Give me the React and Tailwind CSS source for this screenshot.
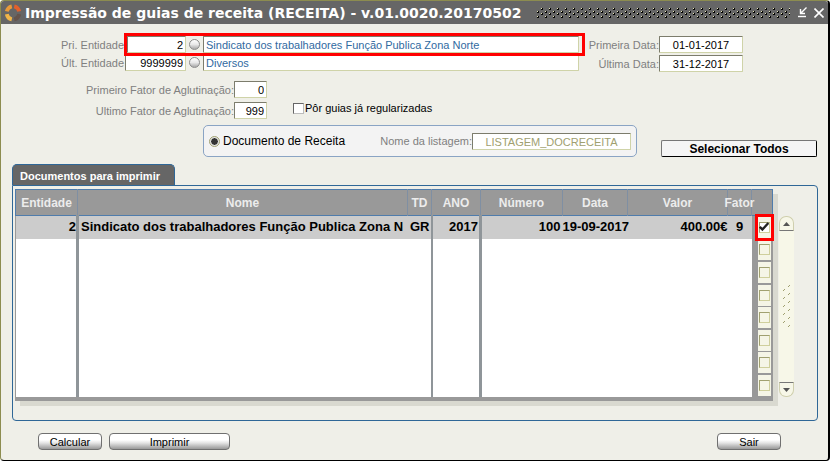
import React, { useState } from "react";

const fieldBase =
  "border border-t-[#7c7c6c] border-l-[#7c7c6c] border-r-[#cfd3a8] border-b-[#cfd3a8] bg-white rounded-[1px] outline-none h-[17px] px-[2px] pt-px leading-[14px]";

function Field({ className, ...props }) {
  return <input type="text" className={`${fieldBase} ${className}`} {...props} />;
}

function DotButton({ label }) {
  return (
    <button
      type="button"
      aria-label={label}
      className="h-[11px] w-[11px] shrink-0 rounded-full border border-[#8c8c8c] bg-linear-to-b from-white via-[#e8e8e8] to-[#a8a8a8]"
    />
  );
}

function Logo() {
  return (
    <svg width="16" height="18" viewBox="0 0 16 18" fill="none" strokeWidth="3.8">
      <path d="M6.8 2.4 A6.6 6.6 0 0 0 1.8 7.4" stroke="#e89a3a" />
      <path d="M9.2 2.4 A6.6 6.6 0 0 1 14.2 7.4" stroke="#e2602c" />
      <path d="M1.8 10.2 A6.6 6.6 0 0 0 6.8 15.4" stroke="#f0b548" />
      <path d="M14.2 10.2 A6.6 6.6 0 0 1 9.2 15.4" stroke="#66544c" />
    </svg>
  );
}

function TitleBar() {
  return (
    <header className="flex h-[23px] items-center rounded-t-[3px] bg-[#666] pl-1 pr-1 text-white">
      <Logo />
      <h1 className="ml-1 whitespace-nowrap font-['DejaVu_Sans',sans-serif] text-[14px] leading-[18px] font-bold">
        Impressão de guias de receita (RECEITA) - v.01.0020.20170502
      </h1>
      <svg className="ml-4 h-[11px] min-w-0 flex-1" aria-hidden="true" shapeRendering="crispEdges">
        <defs>
          <pattern id="grip" width="8" height="11" patternUnits="userSpaceOnUse">
            <path d="M0 4h1v1h-1zM0 9h1v1h-1zM4 1h1v1h-1zM4 6h1v1h-1z" fill="#e6e6b8" />
            <path
              d="M1 4h1v1h-1zM0 5h2v1h-2zM1 9h1v1h-1zM0 10h2v1h-2zM5 1h1v1h-1zM4 2h2v1h-2zM5 6h1v1h-1zM4 7h2v1h-2z"
              fill="#000"
            />
          </pattern>
        </defs>
        <rect width="100%" height="100%" fill="url(#grip)" />
      </svg>
      <button type="button" aria-label="Minimizar" className="ml-2">
        <svg width="9" height="11" viewBox="0 0 9 11" fill="none" stroke="#fff">
          <path d="M8.5 0.5 L2.5 6.5 M2.5 2 V6.5 H7" strokeWidth="1.4" />
          <path d="M0 9.5 H8" strokeWidth="1.4" />
        </svg>
      </button>
      <button type="button" aria-label="Fechar" className="ml-[7px]">
        <svg width="10" height="10" viewBox="0 0 10 10" fill="none" stroke="#fff" strokeWidth="1.6">
          <path d="M0.5 0.5 L9.5 9.5 M9.5 0.5 L0.5 9.5" />
        </svg>
      </button>
    </header>
  );
}

function EntityRow({ id, label, code, name, marked }) {
  return (
    <div className="flex items-center">
      <label htmlFor={id} className="w-[120px] shrink-0 text-right text-[#808080]">
        {label}
      </label>
      <div
        className={`-my-[3px] flex min-w-0 flex-1 items-center border-[3px] ${marked ? "relative border-[#ff0000]" : "border-transparent"}`}
      >
        <Field
          id={id}
          defaultValue={code}
          className={`text-right ${marked ? "w-[59px]" : "-ml-[2px] w-[61px]"}`}
        />
        <span className="mx-[3px] flex">
          <DotButton label={`Procurar ${label}`} />
        </span>
        <Field
          aria-label={`Nome ${label}`}
          defaultValue={name}
          className="mr-[3px] min-w-0 flex-1 text-[#316a9f]"
        />
      </div>
    </div>
  );
}

function LabelledField({ id, label, value, width }) {
  return (
    <div className="flex items-center justify-end">
      <label htmlFor={id} className="text-[#808080]">
        {label}
      </label>
      <Field id={id} defaultValue={value} className={width} />
    </div>
  );
}

function PushButton({ children, className }) {
  return (
    <button
      type="button"
      className={`h-[17px] rounded-[4px] border border-[#707070] bg-linear-to-b from-white from-40% via-[#e4e4e4] via-60% to-[#999] text-[11px] leading-[16px] text-black ${className}`}
    >
      {children}
    </button>
  );
}

function CheckCell({ checked, onChange, marked, label }) {
  return (
    <td className="bg-[#999] p-0 pl-[6px] pr-[1px]">
      <div
        className={`flex h-[21px] w-[13px] items-center justify-center bg-[#f5f5e6] ${marked ? "outline-[3px] outline-[#ff0000]" : ""}`}
      >
        <input
          type="checkbox"
          aria-label={label}
          checked={checked}
          onChange={onChange}
          className="peer h-[11px] w-[11px] appearance-none border border-t-[#a0a070] border-l-[#a0a070] border-r-[#cfcf9c] border-b-[#cfcf9c] bg-[#f5f5e6] checked:bg-white"
        />
        <svg
          className="pointer-events-none absolute hidden peer-checked:block"
          width="10"
          height="10"
          viewBox="0 0 10 10"
          fill="none"
          stroke="#222"
          strokeWidth="2.4"
        >
          <path d="M0.8 4.8 L3.4 7.6 L9.4 1" />
        </svg>
      </div>
    </td>
  );
}

function DocumentTable() {
  const [checks, setChecks] = useState([true, false, false, false, false, false, false, false]);
  const toggle = (i) => setChecks(checks.map((c, n) => (n === i ? !c : c)));
  const head = "border-l border-[#7f8fa3] p-0 font-bold";
  return (
    <table className="h-[212px] w-full table-fixed border-collapse bg-white shadow-[5px_5px_0_#d9d9d0]">
      <colgroup>
        <col className="w-[62px]" />
        <col />
        <col className="w-[24px]" />
        <col className="w-[49px]" />
        <col className="w-[82px]" />
        <col className="w-[65px]" />
        <col className="w-[100px]" />
        <col className="w-[24px]" />
        <col className="w-[21px]" />
      </colgroup>
      <thead>
        <tr className="h-[26px] border border-[#4f7cac] bg-[#999] text-xs text-[#ececec]">
          <th className="p-0 font-bold">Entidade</th>
          <th className={head}>Nome</th>
          <th className={head}>TD</th>
          <th className={head}>ANO</th>
          <th className={head}>Número</th>
          <th className={head}>Data</th>
          <th className={head}>Valor</th>
          <th className={head}>
            <span className="-mx-1 block">Fator</span>
          </th>
          <th className={head} aria-label="Selecionar" />
        </tr>
      </thead>
      <tbody className="border-b-4 border-l border-[#999] text-[13px] leading-[20px] font-bold">
        {checks.map((checked, i) => (
          <tr key={i} className={i === 0 ? "bg-[#ccc]" : ""}>
            <td className="border-r-[3px] border-[#8f9599] p-0 text-right">{i === 0 && "2"}</td>
            <td className="overflow-hidden p-0 pl-[2px] whitespace-nowrap">
              {i === 0 && "Sindicato dos trabalhadores Função Publica Zona N"}
            </td>
            <td className="border-r-2 border-[#8f9599] p-0 pr-px text-right">{i === 0 && "GR"}</td>
            <td className="border-r-[3px] border-[#8f9599] p-0 pr-px text-right">{i === 0 && "2017"}</td>
            <td className="p-0 pr-[2px] text-right">{i === 0 && "100"}</td>
            <td className="p-0 text-right whitespace-nowrap">{i === 0 && "19-09-2017"}</td>
            <td className="p-0 text-right">{i === 0 && "400.00€"}</td>
            <td className="p-0 text-center">{i === 0 && "9"}</td>
            <CheckCell
              checked={checked}
              onChange={() => toggle(i)}
              marked={i === 0}
              label={`Imprimir documento ${i + 1}`}
            />
          </tr>
        ))}
      </tbody>
    </table>
  );
}

function ScrollBar() {
  return (
    <div className="mt-[27px] flex h-[181px] w-[15px] flex-col items-center rounded-[7px] bg-[#f7f7e8]">
      <button
        type="button"
        aria-label="Subir"
        className="flex h-[15px] w-full items-center justify-center rounded-t-[7px] border border-[#cfcfae] border-b-[#777]"
      >
        <svg width="7" height="4" viewBox="0 0 7 4">
          <path d="M3.5 0 L7 4 H0z" fill="#555" />
        </svg>
      </button>
      <div className="flex flex-1 items-center">
        <svg width="8" height="44" aria-hidden="true">
          <defs>
            <pattern id="thumb" width="8" height="8" patternUnits="userSpaceOnUse">
              <path d="M5 2 L7 0 M0 6 L2 4" stroke="#a0a070" />
            </pattern>
          </defs>
          <rect width="8" height="44" fill="url(#thumb)" />
        </svg>
      </div>
      <button
        type="button"
        aria-label="Descer"
        className="flex h-[15px] w-full items-center justify-center rounded-b-[7px] border border-[#cfcfae] border-t-[#777]"
      >
        <svg width="7" height="4" viewBox="0 0 7 4">
          <path d="M3.5 4 L7 0 H0z" fill="#555" />
        </svg>
      </button>
    </div>
  );
}

export default function App() {
  return (
    <div className="min-h-screen bg-white pr-px font-['Liberation_Sans',Arial,sans-serif] text-[11px] leading-[14px] text-black">
      <main className="flex min-h-screen flex-col rounded-[4px] border border-r-2 border-t-[#8c8c50] border-r-black border-b-black border-l-[#8c8c50] bg-[#efefe8]">
        <TitleBar />

        <div className="mt-3 flex items-start justify-between pr-[85px] pl-[3px]">
          <div className="flex w-[581px] flex-col gap-px">
            <EntityRow
              id="first"
              label="Pri. Entidade"
              code="2"
              name="Sindicato dos trabalhadores Função Publica Zona Norte"
              marked
            />
            <EntityRow id="last" label="Últ. Entidade" code="9999999" name="Diversos" />
          </div>
          <div className="flex flex-col gap-[2px]">
            <LabelledField id="d1" label="Primeira Data:" value="01-01-2017" width="w-[84px] text-center" />
            <LabelledField id="d2" label="Última Data:" value="31-12-2017" width="w-[84px] text-center" />
          </div>
        </div>

        <div className="mt-[9px] flex items-end">
          <div className="flex w-[266px] flex-col gap-1">
            <LabelledField id="f1" label="Primeiro Fator de Aglutinação:" value="0" width="w-[33px] text-right" />
            <LabelledField id="f2" label="Ultimo Fator de Aglutinação:" value="999" width="w-[33px] text-right" />
          </div>
          <label className="mb-1 ml-[26px] flex items-center gap-px">
            <input
              type="checkbox"
              className="h-[11px] w-[11px] appearance-none border border-t-[#666] border-r-[#bbb] border-b-[#bbb] border-l-[#666] bg-white checked:bg-[#333]"
            />
            Pôr guias já regularizadas
          </label>
        </div>

        <div className="mt-[6px] flex items-end justify-between pr-[11px] pl-[202px]">
          <div className="flex h-8 w-[434px] items-center rounded-[5px] border border-[#8aa4c4] bg-[#f3f3f3] pr-[5px] pl-[6px]">
            <label className="flex items-center gap-1 text-[12px]">
              <input
                type="radio"
                name="kind"
                defaultChecked
                className="h-[9px] w-[9px] appearance-none rounded-full bg-white outline outline-[#a0a070] checked:border checked:border-white checked:bg-[#333]"
              />
              Documento de Receita
            </label>
            <label htmlFor="listing" className="ml-auto text-[#808080]">
              Nome da listagem:
            </label>
            <Field
              id="listing"
              defaultValue="LISTAGEM_DOCRECEITA"
              className="w-[159px] text-center text-[#a0a070]"
            />
          </div>
          <button
            type="button"
            className="h-[17px] w-[156px] rounded-[2px] border border-t-[#777] border-r-black border-b-black border-l-[#777] bg-[#f5f5f5] text-[12px] leading-[14px] font-bold"
          >
            Selecionar Todos
          </button>
        </div>

        <section className="mt-[7px] pr-[10px] pl-[11px]">
          <h2 className="flex h-[21px] w-[163px] items-center rounded-t-[5px] border border-b-0 border-[#2f6797] bg-[#666] pt-[2px] pl-[7px] text-[11px] font-bold whitespace-nowrap text-white">
            Documentos para imprimir
          </h2>
          <div className="flex h-[236px] items-start rounded-tr-[4px] rounded-b-[4px] border border-[#2f6797] pt-[3px] pr-[23px] pl-[2px]">
            <div className="min-w-0 flex-1">
              <DocumentTable />
            </div>
            <div className="ml-[6px]">
              <ScrollBar />
            </div>
          </div>
        </section>

        <footer className="mt-3 flex gap-[7px] pr-[47px] pb-2 pl-[37px]">
          <PushButton className="w-[64px]">Calcular</PushButton>
          <PushButton className="w-[121px]">Imprimir</PushButton>
          <PushButton className="ml-auto w-[64px]">Sair</PushButton>
        </footer>
      </main>
    </div>
  );
}
